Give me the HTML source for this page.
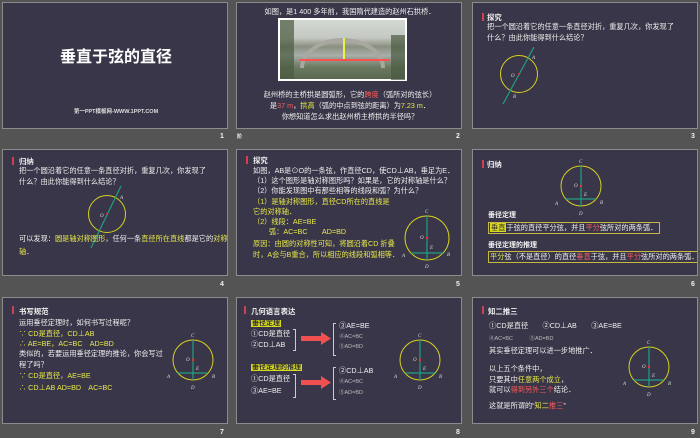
<!DOCTYPE html>
<html><head><meta charset="utf-8"><style>
*{margin:0;padding:0;box-sizing:border-box}
body{width:700px;height:438px;background:#545454;position:relative;overflow:hidden;font-family:"Liberation Sans","Noto Sans CJK SC",sans-serif;color:#f0f0f0}
.s{position:absolute;width:226px;height:127px;background:#383648;border:1px solid #8c8c8c;overflow:hidden}
.n{position:absolute;font-size:7px;font-weight:bold;color:#eee}
.t{position:absolute;font-size:7.2px;white-space:nowrap;line-height:8px}
.y{color:#e8e84a}.r{color:#ff5a5a}
.h{position:absolute;font-size:7.4px;font-weight:bold;white-space:nowrap}
.bar{position:absolute;width:2px;height:8px;background:#d04050}
svg{position:absolute;overflow:visible}
svg text{font-family:"Liberation Serif",serif;font-style:italic;fill:#ddd;font-size:5px}
.hl{background:#d8d820;color:#333;padding:0 1px}
</style></head><body>

<!-- slide 1 -->
<div class="s" style="left:2px;top:2px">
<div style="position:absolute;left:0;width:226px;top:40px;text-align:center;font-size:16px;font-weight:bold;color:#fff">垂直于弦的直径</div>
<div style="position:absolute;left:0;width:226px;top:104px;text-align:center;font-size:5.5px;font-weight:bold;color:#ddd">第一PPT模板网-WWW.1PPT.COM</div>
</div>
<div class="n" style="left:220px;top:133px">1</div>

<!-- slide 2 -->
<div class="s" style="left:236px;top:2px">
<div class="t" style="left:0;width:226px;text-align:center;top:5px">如图，是1 400 多年前，我国隋代建造的赵州石拱桥．</div>
<div style="position:absolute;left:41px;top:15px;width:129px;height:63px;background:#fff;padding:2px">
<div style="width:100%;height:100%;background:linear-gradient(#d4d8d4 0%,#c4c8c2 30%,#8a9080 45%,#a8aea8 60%,#6a7a60 80%,#5a6850 100%);position:relative">
<div style="position:absolute;left:20px;top:18px;width:85px;height:30px;border:4px solid #a8a8a0;border-bottom:none;border-radius:50% 50% 0 0/100% 100% 0 0"></div>
<div style="position:absolute;left:20px;top:39px;width:90px;height:2px;background:#ff5050"></div>
<div style="position:absolute;left:63px;top:18px;width:2px;height:21px;background:#f0f040"></div>
<div style="position:absolute;left:0;top:0;width:14px;height:100%;background:#4a5a40;opacity:.7"></div>
<div style="position:absolute;right:0;top:15px;width:14px;height:45px;background:#4a5a40;opacity:.7"></div>
</div></div>
<div class="t" style="left:0;width:226px;text-align:center;top:88px">赵州桥的主桥拱是圆弧形，它的<span class="r">跨度</span>（弧所对的弦长）</div>
<div class="t" style="left:0;width:226px;text-align:center;top:99px">是<span class="r">37 m</span>，<span class="y">拱高</span>（弧的中点到弦的距离）为<span class="y">7.23 m</span>．</div>
<div class="t" style="left:0;width:226px;text-align:center;top:110px">你想知道怎么求出赵州桥主桥拱的半径吗？</div>
</div>
<div class="n" style="left:456px;top:133px">2</div>
<div class="n" style="left:237px;top:133px;font-size:5px">阶</div>

<!-- slide 3 -->
<div class="s" style="left:472px;top:2px">
<div class="bar" style="left:9px;top:10px"></div>
<div class="h" style="left:14px;top:9px">探究</div>
<div class="t" style="left:14px;top:20px">把一个圆沿着它的任意一条直径对折，重复几次，你发现了</div>
<div class="t" style="left:14px;top:31px">什么？由此你能得到什么结论？</div>
<svg style="left:0;top:0" width="226" height="127">
<circle cx="46" cy="71" r="18.5" fill="none" stroke="#d8d020" stroke-width="1"/>
<line x1="61" y1="44" x2="30" y2="101" stroke="#20a080" stroke-width="1.2"/>
<circle cx="46" cy="71" r="1" fill="#f03030"/>
<text x="59" y="56">A</text><text x="38" y="74">O</text><text x="40" y="95">B</text>
</svg>
</div>
<div class="n" style="left:691px;top:133px">3</div>

<!-- slide 4 -->
<div class="s" style="left:2px;top:149px">
<div class="bar" style="left:9px;top:7px"></div>
<div class="h" style="left:16px;top:6px">归纳</div>
<div class="t" style="left:16px;top:17px">把一个圆沿着它的任意一条直径对折，重复几次，你发现了</div>
<div class="t" style="left:16px;top:28px">什么？由此你能得到什么结论？</div>
<svg style="left:0;top:0" width="226" height="127">
<circle cx="104" cy="64" r="18.5" fill="none" stroke="#d8d020" stroke-width="1"/>
<line x1="118" y1="36" x2="88" y2="98" stroke="#20a080" stroke-width="1.2"/>
<circle cx="104" cy="64" r="1" fill="#f03030"/>
<text x="117" y="49">A</text><text x="97" y="67">O</text>
</svg>
<div class="t" style="left:16px;top:85px">可以发现：<span class="y">圆是轴对称图形</span>，任何一条<span class="y">直径所在直线</span>都是它的<span class="y">对称</span></div>
<div class="t" style="left:16px;top:98px"><span class="y">轴</span>．</div>
</div>
<div class="n" style="left:220px;top:281px">4</div>

<!-- slide 5 -->
<div class="s" style="left:236px;top:149px">
<div class="bar" style="left:9px;top:6px"></div>
<div class="h" style="left:16px;top:5px">探究</div>
<div class="t" style="left:16px;top:17px">如图，AB是⊙O的一条弦，作直径CD，使CD⊥AB，垂足为E．</div>
<div class="t" style="left:16px;top:27px">（1）这个图形是轴对称图形吗？如果是，它的对称轴是什么？</div>
<div class="t" style="left:16px;top:37px">（2）你能发现图中有那些相等的线段和弧？为什么？</div>
<div class="t y" style="left:16px;top:48px">（1）是轴对称图形，直径CD所在的直线是</div>
<div class="t y" style="left:16px;top:58px">它的对称轴．</div>
<div class="t y" style="left:16px;top:68px">（2）线段：AE=BE</div>
<div class="t y" style="left:32px;top:78px">弧：AC=BC　　AD=BD</div>
<div class="t y" style="left:16px;top:90px">原因：由圆的对称性可知，将圆沿着CD 折叠</div>
<div class="t y" style="left:16px;top:101px">时，A会与B重合，所以相应的线段和弧相等．</div>
<svg style="left:160px;top:56px" width="60" height="64" viewBox="-30 -32 60 64">
<circle r="22" fill="none" stroke="#d8d020" stroke-width="1"/>
<line x1="0" y1="-22" x2="0" y2="22" stroke="#20a080" stroke-width="1.2"/>
<line x1="-16" y1="15" x2="16" y2="15" stroke="#20a080" stroke-width="1.2"/>
<circle r="1.2" fill="#f03030"/>
<text x="-2" y="-25">C</text><text x="-2" y="30">D</text><text x="-25" y="19">A</text><text x="20" y="18">B</text><text x="-7" y="1">O</text><text x="3" y="11">E</text>
</svg>
</div>
<div class="n" style="left:456px;top:281px">5</div>

<!-- slide 6 -->
<div class="s" style="left:472px;top:149px">
<div class="bar" style="left:9px;top:10px"></div>
<div class="h" style="left:14px;top:9px">归纳</div>
<svg style="left:78px;top:4px" width="60" height="64" viewBox="-30 -32 60 64">
<circle r="20" fill="none" stroke="#d8d020" stroke-width="1"/>
<line x1="0" y1="-20" x2="0" y2="20" stroke="#20a080" stroke-width="1.2"/>
<line x1="-15" y1="13" x2="15" y2="13" stroke="#20a080" stroke-width="1.2"/>
<circle r="1.2" fill="#f03030"/>
<text x="-2" y="-23">C</text><text x="-2" y="29">D</text><text x="-26" y="19">A</text><text x="19" y="18">B</text><text x="-7" y="1">O</text><text x="3" y="10">E</text>
</svg>
<div class="h" style="left:15px;top:60px;font-size:7px">垂径定理</div>
<div class="t" style="left:15px;top:72px;border:1px solid #c8b840;padding:1px 2px 1px 1px"><span class="hl">垂直</span>于弦的直径平分弦，并且<span class="r">平分</span>弦所对的两条弧．</div>
<div class="h" style="left:15px;top:90px;font-size:7px">垂径定理的推理</div>
<div class="t" style="left:15px;top:101px;border:1px solid #c8b840;padding:1px 2px 1px 1px"><span class="y">平分</span>弦（不是直径）的直径<span class="r">垂直</span>于弦，并且<span class="r">平分</span>弦所对的两条弧．</div>
</div>
<div class="n" style="left:691px;top:281px">6</div>

<!-- slide 7 -->
<div class="s" style="left:2px;top:297px">
<div class="bar" style="left:9px;top:8px"></div>
<div class="h" style="left:16px;top:8px">书写规范</div>
<div class="t" style="left:16px;top:21px">运用垂径定理时，如何书写过程呢？</div>
<div class="t y" style="left:16px;top:32px">∵ CD是直径，CD⊥AB</div>
<div class="t y" style="left:16px;top:42px">∴ AE=BE，AC=BC　AD=BD</div>
<div class="t" style="left:16px;top:52px">类似的，若要运用垂径定理的推论，你会写过</div>
<div class="t" style="left:16px;top:63px">程了吗？</div>
<div class="t y" style="left:16px;top:74px">∵ CD是直径，AE=BE</div>
<div class="t y" style="left:16px;top:86px">∴ CD⊥AB  AD=BD　AC=BC</div>
<svg style="left:160px;top:30px" width="60" height="64" viewBox="-30 -32 60 64">
<circle r="20" fill="none" stroke="#d8d020" stroke-width="1"/>
<line x1="0" y1="-20" x2="0" y2="20" stroke="#20a080" stroke-width="1.2"/>
<line x1="-15" y1="13" x2="15" y2="13" stroke="#20a080" stroke-width="1.2"/>
<circle r="1.2" fill="#f03030"/>
<text x="-2" y="-23">C</text><text x="-2" y="29">D</text><text x="-26" y="18">A</text><text x="19" y="18">B</text><text x="-7" y="1">O</text><text x="3" y="10">E</text>
</svg>
</div>
<div class="n" style="left:220px;top:429px">7</div>

<!-- slide 8 -->
<div class="s" style="left:236px;top:297px">
<div class="bar" style="left:7px;top:8px"></div>
<div class="h" style="left:14px;top:8px">几何语言表达</div>
<div class="h" style="left:14px;top:20px;font-size:7px"><span class="hl">垂径定理</span></div>
<div class="t" style="left:14px;top:32px">①CD是直径</div>
<div class="t" style="left:14px;top:43px">②CD⊥AB</div>
<div style="position:absolute;left:56px;top:31px;width:3px;height:22px;border:1px solid #ccc;border-left:none"></div>
<div class="h" style="left:14px;top:64px;font-size:7px"><span class="hl">垂径定理的推理</span></div>
<div class="t" style="left:14px;top:77px">①CD是直径</div>
<div class="t" style="left:14px;top:89px">③AE=BE</div>
<div style="position:absolute;left:56px;top:76px;width:3px;height:24px;border:1px solid #ccc;border-left:none"></div>
<svg style="left:0;top:0" width="226" height="127">
<polygon points="64,38 84,38 84,34 94,40.5 84,47 84,43 64,43" fill="#f05050"/>
<polygon points="64,82 84,82 84,78 94,84.5 84,91 84,87 64,87" fill="#f05050"/>
</svg>
<div style="position:absolute;left:96px;top:25px;width:3px;height:33px;border:1px solid #ccc;border-right:none"></div>
<div style="position:absolute;left:96px;top:69px;width:3px;height:33px;border:1px solid #ccc;border-right:none"></div>
<div class="t" style="left:102px;top:24px">③AE=BE</div>
<div class="t" style="left:102px;top:35px;font-size:5.5px;color:#bbb">④AC=BC</div>
<div class="t" style="left:102px;top:45px;font-size:5.5px;color:#bbb">⑤AD=BD</div>
<div class="t" style="left:102px;top:69px">②CD⊥AB</div>
<div class="t" style="left:102px;top:80px;font-size:5.5px;color:#bbb">④AC=BC</div>
<div class="t" style="left:102px;top:91px;font-size:5.5px;color:#bbb">⑤AD=BD</div>
<svg style="left:153px;top:30px" width="60" height="64" viewBox="-30 -32 60 64">
<circle r="20" fill="none" stroke="#d8d020" stroke-width="1"/>
<line x1="0" y1="-20" x2="0" y2="20" stroke="#20a080" stroke-width="1.2"/>
<line x1="-15" y1="13" x2="15" y2="13" stroke="#20a080" stroke-width="1.2"/>
<circle r="1.2" fill="#f03030"/>
<text x="-2" y="-23">C</text><text x="-2" y="29">D</text><text x="-26" y="18">A</text><text x="19" y="18">B</text><text x="-7" y="1">O</text><text x="3" y="10">E</text>
</svg>
</div>
<div class="n" style="left:456px;top:429px">8</div>

<!-- slide 9 -->
<div class="s" style="left:472px;top:297px">
<div class="bar" style="left:9px;top:8px"></div>
<div class="h" style="left:15px;top:8px">知二推三</div>
<div class="t" style="left:16px;top:24px">①CD是直径　　②CD⊥AB　　③AE=BE</div>
<div class="t" style="left:16px;top:37px;font-size:5.5px;color:#bbb">④AC=BC　　　⑤AD=BD</div>
<div class="t" style="left:16px;top:49px">其实垂径定理可以进一步地推广．</div>
<div class="t" style="left:16px;top:67px">以上五个条件中，</div>
<div class="t" style="left:16px;top:78px">只要其中<span class="y">任意两个成立</span>，</div>
<div class="t" style="left:16px;top:88px">就可以<span class="r">得到另外三个</span>结论．</div>
<div class="t" style="left:16px;top:104px">这就是所谓的“<span class="y">知二</span><span class="r">推三</span>”</div>
<svg style="left:146px;top:37px" width="60" height="64" viewBox="-30 -32 60 64">
<circle r="20" fill="none" stroke="#d8d020" stroke-width="1"/>
<line x1="0" y1="-20" x2="0" y2="20" stroke="#20a080" stroke-width="1.2"/>
<line x1="-15" y1="13" x2="15" y2="13" stroke="#20a080" stroke-width="1.2"/>
<circle r="1.2" fill="#f03030"/>
<text x="-2" y="-23">C</text><text x="-2" y="29">D</text><text x="-26" y="18">A</text><text x="19" y="18">B</text><text x="-7" y="1">O</text><text x="3" y="10">E</text>
</svg>
</div>
<div class="n" style="left:691px;top:429px">9</div>

</body></html>
